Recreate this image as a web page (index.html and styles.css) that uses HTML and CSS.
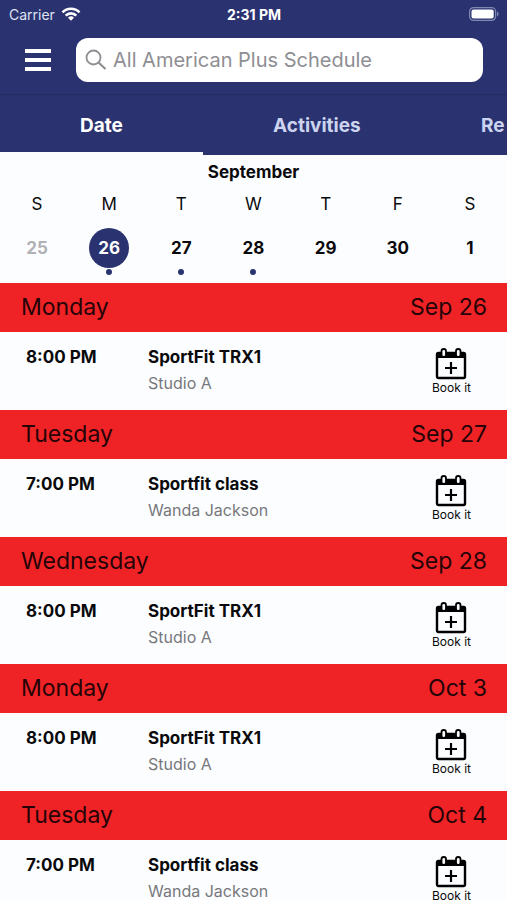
FILE: index.html
```html
<!DOCTYPE html>
<html lang="en">

<head>
    <meta charset="UTF-8">
    <meta name="viewport" content="width=device-width, initial-scale=1.0">
    <title>All American Plus Schedule</title>
    <link rel="stylesheet" href="styles.css">
</head>

<body>

    <svg class="sprite" aria-hidden="true">
        <symbol id="book" viewBox="0 0 32 34">
            <rect x="2" y="6" width="28" height="25" rx="1.500" fill="none" stroke="#000" stroke-width="2.400" />
            <path d="M2 5h28v6H2z" />
            <rect x="6.500" y="2" width="4.500" height="8" rx="2.200" fill="#fcfdff" stroke="#000" stroke-width="1.800" />
            <rect x="21" y="2" width="4.500" height="8" rx="2.200" fill="#fcfdff" stroke="#000" stroke-width="1.800" />
            <path d="M16 15v12M10 21h12" fill="none" stroke="#000" stroke-width="2.200" />
        </symbol>
    </svg>

    <div class="app">
        <header class="top">
            <div class="status">
                <div class="carrier">
                    <span>Carrier</span>
                    <svg width="20" height="16" viewBox="0 0 20 16" fill="none" stroke="#fff" stroke-width="2.600">
                        <path d="M1.500 6.300a12 12 0 0 1 17 0M4.700 9.600a7.500 7.500 0 0 1 10.600 0" />
                        <path d="M10 14.800l-3-3a4.300 4.300 0 0 1 6 0z" fill="#fff" stroke="none" />
                    </svg>
                </div>
                <div class="clock">2:31 PM</div>
                <div class="battery">
                    <svg width="30" height="14" viewBox="0 0 30 14">
                        <rect x=".6" y=".6" width="26" height="12.800" rx="4" fill="none" stroke="#8087b0" stroke-width="1.200" />
                        <rect x="2.500" y="2.500" width="22.200" height="9" rx="2" fill="#fff" />
                        <path d="M28 4.500c2 .8 2 4.200 0 5z" fill="#8087b0" />
                    </svg>
                </div>
            </div>
            <div class="search-bar">
                <button class="menu" type="button" aria-label="Menu">
                    <svg width="28" height="24" viewBox="0 0 28 24" fill="#fff">
                        <path d="M1 1h26v4H1zM1 10h26v4H1zM1 19h26v4H1z" />
                    </svg>
                </button>
                <label class="search">
                    <svg width="22" height="22" viewBox="0 0 22 22" fill="none" stroke="#8e8e93" stroke-width="1.800">
                        <circle cx="8.500" cy="8.500" r="7" />
                        <path d="M13.500 13.500l7 6.500" stroke-width="2.200" />
                    </svg>
                    <input type="search" placeholder="All American Plus Schedule" aria-label="Search schedule">
                </label>
            </div>
        </header>

        <nav class="tabs">
            <a class="tab active" href="#date">Date</a>
            <a class="tab" href="#activities">Activities</a>
            <a class="tab last" href="#re">Re</a>
        </nav>

        <section class="calendar">
            <h1>September</h1>
            <div class="week names">
                <span>S</span><span>M</span><span>T</span><span>W</span><span>T</span><span>F</span><span>S</span>
            </div>
            <div class="week days">
                <button type="button" class="past">25</button>
                <button type="button" class="selected has-event">26</button>
                <button type="button" class="has-event">27</button>
                <button type="button" class="has-event">28</button>
                <button type="button">29</button>
                <button type="button">30</button>
                <button type="button">1</button>
            </div>
        </section>

        <main class="list">
            <section>
                <h2><span>Monday</span><span>Sep 26</span></h2>
                <div class="event">
                    <div class="time">8:00 PM</div>
                    <div class="info">
                        <h3>SportFit TRX1</h3>
                        <p>Studio A</p>
                    </div>
                    <button class="book" type="button"><svg><use href="#book" /></svg>Book it</button>
                </div>
            </section>
            <section>
                <h2><span>Tuesday</span><span>Sep 27</span></h2>
                <div class="event">
                    <div class="time">7:00 PM</div>
                    <div class="info">
                        <h3>Sportfit class</h3>
                        <p>Wanda Jackson</p>
                    </div>
                    <button class="book" type="button"><svg><use href="#book" /></svg>Book it</button>
                </div>
            </section>
            <section>
                <h2><span>Wednesday</span><span>Sep 28</span></h2>
                <div class="event">
                    <div class="time">8:00 PM</div>
                    <div class="info">
                        <h3>SportFit TRX1</h3>
                        <p>Studio A</p>
                    </div>
                    <button class="book" type="button"><svg><use href="#book" /></svg>Book it</button>
                </div>
            </section>
            <section>
                <h2><span>Monday</span><span>Oct 3</span></h2>
                <div class="event">
                    <div class="time">8:00 PM</div>
                    <div class="info">
                        <h3>SportFit TRX1</h3>
                        <p>Studio A</p>
                    </div>
                    <button class="book" type="button"><svg><use href="#book" /></svg>Book it</button>
                </div>
            </section>
            <section>
                <h2><span>Tuesday</span><span>Oct 4</span></h2>
                <div class="event">
                    <div class="time">7:00 PM</div>
                    <div class="info">
                        <h3>Sportfit class</h3>
                        <p>Wanda Jackson</p>
                    </div>
                    <button class="book" type="button"><svg><use href="#book" /></svg>Book it</button>
                </div>
            </section>
        </main>
    </div>

</body>

</html>
```
FILE: styles.css
```css
* {
    box-sizing: border-box;
}

body,
h1,
h2,
h3,
p {
    margin: 0;
}

body,
button,
input {
    font-family: Inter, "Liberation Sans", sans-serif;
}

button {
    padding: 0;
    border: 0;
    background: none;
    color: inherit;
}

svg {
    display: block;
}

.sprite {
    display: none;
}

.app {
    display: flex;
    flex-direction: column;
    height: 100vh;
    background: #fcfdff;
    color: #0a0a0c;
}

.top {
    flex: none;
    background: #2a336f;
    color: #fff;
    border-bottom: 1px solid #232b60;
}

.status {
    display: grid;
    grid-template-columns: 1fr auto 1fr;
    align-items: center;
    height: 28px;
    padding: 0 8px 0 9px;
    font-size: 14px;
}

.carrier {
    display: flex;
    align-items: center;
    gap: 6px;
    color: #dfe2f2;
}

.clock {
    font-weight: 700;
}

.battery {
    justify-self: end;
}

.search-bar {
    display: flex;
    align-items: center;
    padding: 10px 24px 12px;
}

.menu {
    width: 28px;
    margin-right: 24px;
}

.search {
    flex: 1;
    display: flex;
    align-items: center;
    height: 44px;
    padding: 0 9px;
    border-radius: 12px;
    background: #fff;
}

.search input {
    flex: 1;
    min-width: 0;
    padding: 0 6px;
    border: 0;
    outline: 0;
    background: none;
    font-size: 20px;
}

.search input::placeholder {
    color: #8e8e93;
}

.tabs {
    flex: none;
    display: flex;
    height: 60px;
    overflow: hidden;
    background: #2a336f;
}

.tab {
    flex: 0 0 45%;
    padding-top: 2px;
    border-bottom: 3px solid transparent;
    color: #ccd4f0;
    font-size: 19px;
    font-weight: 700;
    line-height: 58px;
    text-align: center;
    text-decoration: none;
}

.tab.active {
    flex-basis: 40%;
    border-color: #fcfdff;
    color: #fff;
}

.tab.last {
    padding-left: 50px;
    text-align: left;
}

.calendar {
    flex: none;
    padding: 5px 1px 9px;
}

.calendar h1 {
    font-size: 17px;
    font-weight: 700;
    line-height: 24px;
    text-align: center;
}

.week {
    display: grid;
    grid-template-columns: repeat(7, 1fr);
    justify-items: center;
}

.names {
    padding: 8px 0 12px;
    font-size: 17px;
    line-height: 24px;
}

.days button {
    position: relative;
    width: 40px;
    height: 40px;
    margin-bottom: 6px;
    border-radius: 50%;
    font-size: 17px;
    font-weight: 700;
}

.days .past {
    color: #b0b1b4;
}

.days .selected {
    background: #2a336f;
    color: #fff;
}

/* dot under days with classes */
.days .has-event::after {
    content: "";
    position: absolute;
    top: 41px;
    left: 17px;
    width: 6px;
    height: 6px;
    border-radius: 50%;
    background: #2a336f;
}

.list {
    flex: 1;
    min-height: 0;
    overflow-y: auto;
    scrollbar-width: none;
}

.list h2 {
    display: flex;
    justify-content: space-between;
    padding: 0 20px 0 21px;
    background: #ef2326;
    color: #250306;
    font-size: 23px;
    font-weight: 400;
    line-height: 49px;
}

.event {
    display: flex;
    align-items: flex-start;
    height: 78px;
    padding: 12px 36px 0 26px;
}

.time,
.event h3 {
    font-size: 17px;
    font-weight: 700;
    line-height: 26px;
}

.time {
    width: 122px;
}

.info {
    flex: 1;
}

.event p {
    color: #77787c;
    font-size: 16px;
    line-height: 26px;
}

.book {
    display: flex;
    flex-direction: column;
    align-items: center;
    padding-top: 3px;
    font-size: 12px;
    line-height: 14px;
}

.book svg {
    width: 32px;
    height: 34px;
}
```
